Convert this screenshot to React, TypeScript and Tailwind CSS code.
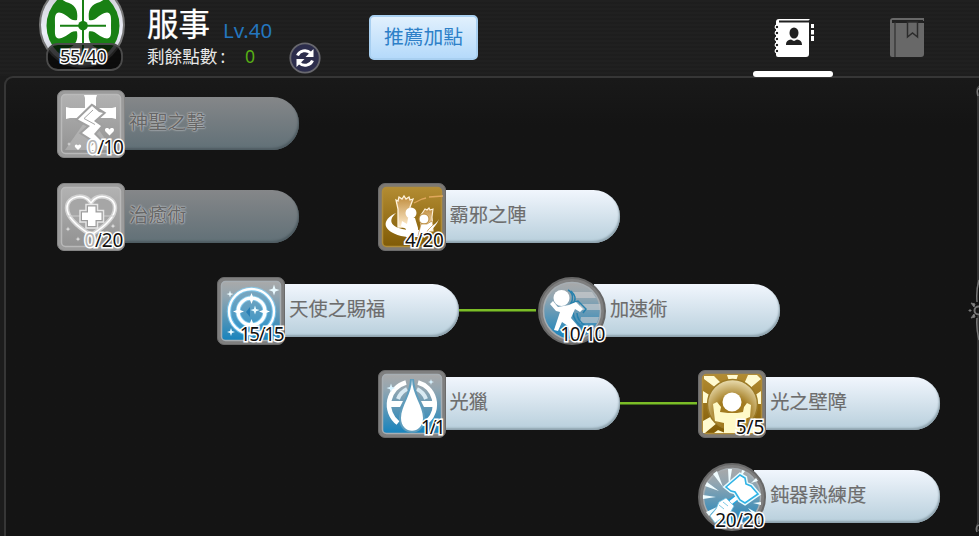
import React from 'react';
import clsx from 'clsx';

type IconKey =
  | 'holyStrike'
  | 'heal'
  | 'castle'
  | 'blessing'
  | 'agility'
  | 'drop'
  | 'barrier'
  | 'mace';

type Tone = 'gray' | 'gold' | 'blue';

interface Skill {
  name: string;
  current: number;
  max: number;
  icon: IconKey;
  tone: Tone;
  round?: boolean;
  linked?: boolean;
  place: string;
  tracking: string;
}

const skills: Skill[] = [
  { name: '神聖之擊', current: 0, max: 10, icon: 'holyStrike', tone: 'gray', place: 'col-start-1 row-start-1', tracking: 'tracking-[-1px]' },
  { name: '治癒術', current: 0, max: 20, icon: 'heal', tone: 'gray', place: 'col-start-1 row-start-2', tracking: 'tracking-[-0.3px]' },
  { name: '霸邪之陣', current: 4, max: 20, icon: 'castle', tone: 'gold', place: 'col-start-3 row-start-2', tracking: 'tracking-[-0.3px]' },
  { name: '天使之賜福', current: 15, max: 15, icon: 'blessing', tone: 'blue', linked: true, place: 'col-start-2 row-start-3', tracking: 'tracking-[-1.4px]' },
  { name: '加速術', current: 10, max: 10, icon: 'agility', tone: 'blue', round: true, place: 'col-start-4 row-start-3', tracking: 'tracking-[-1.4px]' },
  { name: '光獵', current: 1, max: 1, icon: 'drop', tone: 'blue', linked: true, place: 'col-start-3 row-start-4', tracking: 'tracking-[-2px]' },
  { name: '光之壁障', current: 5, max: 5, icon: 'barrier', tone: 'gold', place: 'col-start-5 row-start-4', tracking: 'tracking-[-0.1px]' },
  { name: '鈍器熟練度', current: 20, max: 20, icon: 'mace', tone: 'blue', round: true, place: 'col-start-5 row-start-5', tracking: 'tracking-[-0.3px]' },
];

const sparkle = (x: number, y: number, r: number) =>
  `M${x} ${y - r}L${x + r * 0.25} ${y - r * 0.25}L${x + r} ${y}L${x + r * 0.25} ${y + r * 0.25}L${x} ${y + r}L${x - r * 0.25} ${y + r * 0.25}L${x - r} ${y}L${x - r * 0.25} ${y - r * 0.25}Z`;

const icons: Record<IconKey, React.ReactNode> = {
  holyStrike: (
    <g>
      <path d="M32 26L8 60H56Z" fill="#d6d6d6" opacity=".35" />
      <path d="M27 5h13l-1 3v10h16l4-1v12l-4-1H13l-4 1V17l4 1h15V8z" fill="#fff" />
      <path d="M35 16L21 29.500l12 6.500-8 7 14 9-3 8 6 0 3-8-8-8 7-8-7-5 9-8z" fill="#fff" stroke="#a0a0a0" strokeWidth="4" />
      <path d="M35 16L21 29.500l12 6.500-8 7 14 9-9 8 12 0 3-8-8-8 7-8-7-5 9-8-4-1z" fill="#fff" />
      <path d="M36 20l-9 8.500 11 6" stroke="#a5a5a5" strokeWidth="1" fill="none" />
      <path d="M52.500 45.500l-4-4c-2-3 2-5 4-2 2-3 6-1 4 2z" fill="#fff" />
      <path d="M21 60l-3-3c-1-2 1.500-3.500 3-1.500 1.500-2 4-.5 3 1.500z" fill="#fff" />
      <path d={sparkle(12, 54, 2)} fill="#ddd" />
    </g>
  ),
  heal: (
    <g>
      <path d="M34 52C21 44 10 35 10 25c0-12 18-16 24-5 6-11 24-7 24 5 0 10-11 19-24 27z" fill="#a6a6a6" stroke="#d2d2d2" strokeWidth="4.500" />
      <path d="M34 52C21 44 10 35 10 25c0-12 18-16 24-5 6-11 24-7 24 5 0 10-11 19-24 27z" fill="none" stroke="#fff" strokeWidth="1.500" />
      <path d="M10 33h48" stroke="#ccc" />
      <path d="M31 23.500h7.500v6h6V37h-6v6H31v-6h-6v-7.500h6z" fill="#fff" stroke="#e6e6e6" strokeWidth="5.500" />
      <path d="M31 23.500h7.500v6h6V37h-6v6H31v-6h-6v-7.500h6z" fill="#fff" stroke="#9c9c9c" strokeWidth="2.500" />
      <path d="M31 23.500h7.500v6h6V37h-6v6H31v-6h-6v-7.500h6z" fill="#fff" />
      <path d={`${sparkle(11, 46, 2.5)}${sparkle(21, 56, 2.5)}${sparkle(56, 43, 2.5)}`} fill="#e4e4e4" />
    </g>
  ),
  castle: (
    <g>
      <path d="M18 17l2 1 1-4 3 2 2-3 2 3 3-2 1 3 3-1-3 8v20H20V26z" fill="url(#tower)" stroke="#fff3dc" strokeWidth="1.300" />
      <path d="M45 29l2-3 2 1 2-2 1 2 3-1-1 8 1 14H43V32z" fill="url(#tower)" stroke="#fff3dc" strokeWidth="1.100" />
      <path d="M36 20l8-4 4-1M51 14l14-1" stroke="#e0a75c" strokeWidth="1.300" fill="none" />
      <path d="M18 30C3 37 4 48 23 53c17 4 33-3 38-17-4 8-15 12-31 11C13 45 9 38 18 30z" fill="#fff" />
      <circle cx="33" cy="30" r="5.500" fill="#fff" />
      <path d="M30 35h7l3 10v9H28v-8l-5-3 1-5 5 3z" fill="#fff" />
      <circle cx="46" cy="36" r="5" fill="#fff" stroke="#b98734" strokeWidth="1" />
      <path d="M43 41h6l5-3 1 4-5 5-3 6h-7z" fill="#fff" stroke="#b98734" strokeWidth=".7" />
    </g>
  ),
  blessing: (
    <g>
      <circle cx="34.500" cy="34.500" r="22.500" fill="#3aa3dc" fillOpacity=".35" stroke="#7fd4ff" strokeWidth="4.500" strokeOpacity=".65" />
      <circle cx="34.500" cy="34.500" r="22.500" fill="none" stroke="#fff" strokeWidth="2.300" />
      <circle cx="34.500" cy="34.500" r="13.500" fill="none" stroke="#9be0ff" strokeWidth="5" opacity=".7" />
      <circle cx="34.500" cy="34.500" r="13.500" fill="none" stroke="#fff" strokeWidth="3.200" />
      <path d="M34.500 16l1.500 4 3 2-3 1-1.500 4-1.500-4-3-1 3-2zM34.500 53l1.500-4 3-2-3-1-1.500-4-1.500 4-3 1 3 2zM16 34.500l4-1.500 2-3 1 3 4 1.500-4 1.500-1 3-2-3zM53 34.500l-4-1.500-2-3-1 3-4 1.500 4 1.500 1 3 2-3z" fill="#fff" />
      <path d="M33 30l-4 5 4 5z" fill="#287fb5" />
      <path d={`${sparkle(57, 13, 5.5)}${sparkle(13, 17, 3.5)}${sparkle(14, 55, 4)}${sparkle(38, 33, 4.5)}`} fill="#e9faff" />
    </g>
  ),
  agility: (
    <g>
      <path d="M34 15h20l4 6H36zM42 27h20v6H42zM43 40h18l-2 6H42z" fill="#d0d1d2" opacity=".6" />
      <g fill="none" stroke="#2681ad" strokeWidth="1.500">
        <path d="M30 13c6 3 5 10 3 13l7-2 8 8-3 4" />
        <path d="M33 14c5 5 5 8 3 11M35 34c0 9 5 14 12 18M39 36c0 6 4 10 9 13" />
      </g>
      <circle cx="23.500" cy="21" r="8" fill="#fff" />
      <path d="M20 30l11-2 7-3 7 7-3 3-5-3-4 9 6 7 5 9-5 4-6-1-3-11-6-4-4 9-4-1 4-12 2-6-4-1-6-7 3-3 4 5z" fill="#fff" />
    </g>
  ),
  drop: (
    <g>
      <path d="M28 12.500A23 23 0 0 0 20 53M40 12.500A23 23 0 0 1 50 51" fill="none" stroke="#fff" strokeWidth="4.500" />
      <path d="M20 29c2-6 5-8 9-10M48 29c-2-6-5-8-9-10" fill="none" stroke="#d9eaf3" strokeWidth="4" />
      <path d="M13 31h12l-3 6h-9zM43 31h12v6h-9z" fill="#fff" />
      <path d="M34 9C34 24 23 36 23 48c0 17 22 17 22 0C45 36 34 24 34 9z" fill="#fff" stroke="#5f9dbd" strokeWidth="4" />
      <path d="M34 9C34 24 23 36 23 48c0 17 22 17 22 0C45 36 34 24 34 9z" fill="#fff" />
      <path d={`${sparkle(13, 18, 4.5)}${sparkle(53, 12, 3)}`} fill="#d8f3ff" />
    </g>
  ),
  barrier: (
    <g>
      <path d="M6 6l10 0 7 7-5 5-12-9zM29 5h11l-2 6h-7zM50 5h9l4 4-12 10-5-5zM5 21l8 5-2 7-6 0zM63 21l-7 5 2 8 5 0zM5 51l9-5 5 7-12 10H5zM63 50v13H49l5-12zM20 60l7 3H16z" fill="#fffad0" />
      <circle cx="34.500" cy="34.500" r="25" fill="url(#orb)" stroke="#9b7a26" strokeWidth="1.500" />
      <circle cx="34" cy="32" r="9.500" fill="#fff" />
      <path d="M15 34l4-2 4 5-1 5 8 1h9l6-1 1-5 3-4 4 2-1 12-10 4v12H26V53l-9-2z" fill="#fffac8" />
    </g>
  ),
  mace: (
    <g>
      <g fill="#effcff">
        <path d="M31 24L30 6h4zM25 24L15 11l4-3zM21 28L7 23l2-4zM18 34L5 36v-4zM42 15L44 7l3 1zM53 20L58 15l2 3zM55 40L63 39v3zM50 45L61 51l-3 4zM19 44L11 53l-3-4zM42 50L45 61h-4zM32 50l2 12h-4z" />
      </g>
      <path d="M25 45l16-12" stroke="#24a5dc" strokeWidth="7" />
      <path d="M23 47l18-14" stroke="#fff" strokeWidth="4" />
      <path d="M28 24L42 12l5 3 1 6 5 2 7 8-13 9-5-3-5-8-4-1z" fill="#fff" stroke="#e8fbff" strokeWidth="4.500" />
      <path d="M28 24L42 12l5 3 1 6 5 2 7 8-13 9-5-3-5-8-4-1z" fill="#fff" stroke="#2fb3e6" strokeWidth="1.600" />
      <path d="M21 39l7-4 3 3 5 5-4 7-7 4-8 6-5-7 6-7z" fill="#fff" stroke="#6bc3e4" strokeWidth=".8" />
      <path d="M21 42l5 4M25 39l5 4" stroke="#7dc9e4" strokeWidth="1" />
    </g>
  ),
};

const frameColors: Record<Tone, { edge: string; line: string }> = {
  gray: { edge: '#9b9b9b', line: '#b9b9b9' },
  gold: { edge: '#7d7973', line: '#b08c38' },
  blue: { edge: '#7f7f7f', line: '#a7aeb3' },
};

function SkillIcon({ icon, tone, round }: { icon: IconKey; tone: Tone; round?: boolean }) {
  const { edge, line } = frameColors[tone];
  return (
    <svg viewBox="0 0 68 68" className="block h-[68px] w-[68px]">
      {round ? (
        <>
          <circle cx="34" cy="34" r="33" fill={edge} stroke="#686868" strokeWidth="2" />
          <circle cx="34" cy="34" r="28.500" fill={`url(#${tone})`} stroke={line} strokeWidth="1.500" />
        </>
      ) : (
        <>
          <rect x=".5" y=".5" width="67" height="67" rx="6.500" fill={edge} stroke={tone === 'gray' ? '#858585' : '#6b6b6b'} />
          <rect x="4.500" y="4.500" width="59" height="59" rx="4" fill={`url(#${tone})`} stroke={line} strokeWidth="1.500" />
        </>
      )}
      {icons[icon]}
    </svg>
  );
}

function SkillNode({ skill }: { skill: Skill }) {
  const disabled = skill.tone === 'gray';
  return (
    <div className={clsx('col-span-2 flex h-[68px] items-center', skill.place)}>
      <div className="relative z-10 shrink-0">
        <SkillIcon icon={skill.icon} tone={skill.tone} round={skill.round} />
        <span
          className={clsx(
            'absolute right-[2px] bottom-[-1px] text-[19px] leading-[24px] whitespace-nowrap text-[#111] [-webkit-text-stroke:3px_#fff] [paint-order:stroke_fill]',
            skill.tracking
          )}
        >
          {disabled ? <span className="text-[#b5b5b5]">{skill.current}</span> : skill.current}/{skill.max}
        </span>
      </div>
      <div
        className={clsx(
          '-mt-px -ml-3 flex h-[53px] w-[186px] shrink-0 items-center rounded-r-full pb-[2px] pl-[16px] text-[19.200px] whitespace-nowrap',
          disabled
            ? 'bg-linear-to-b from-[#858789] to-[#617077] text-[#666] shadow-[inset_-1px_-2px_2px_#4f5c62] [text-shadow:0_0_1px_#c0c3c5,0_0_2px_#b8bbbd,0_0_2px_#b8bbbd]'
            : 'bg-linear-to-b from-[#f1f6fd] to-[#b8cfdc] text-[#6d6d6d] shadow-[inset_-1px_-2px_2px_#8fa3ae] [-webkit-text-stroke:0.15px_#6d6d6d]'
        )}
      >
        {skill.name}
      </div>
      {skill.linked && <div className="h-[3px] w-[77px] shrink-0 border-b border-[#456d1b] bg-[#7cbd27]" />}
    </div>
  );
}

function ClassBadge() {
  return (
    <div className="relative h-[76px] w-[86px] shrink-0">
      <svg viewBox="0 0 86 76" className="block h-[76px] w-[86px]">
        <circle cx="43" cy="25" r="42" fill="url(#silver)" stroke="#777" strokeWidth="2" />
        <circle cx="44" cy="25.700" r="36.500" fill="#198014" />
        <path
          d="M38 20C39 12 38 5 27 2L22 -1V-8H66V-1L61 2C50 5 49 12 50 20C57 22 60 13 68 12.500C73 13 72 19 72 25.700C72 32 73 38 68 38.500C60 38 57 30 50 31.500C49 39 50 46 61 49L66 53V60H22V53L27 49C38 46 39 39 38 31.500C31 30 28 38 20 38.500C15 38 16 32 16 25.700C16 19 15 13 20 12.500C28 13 31 22 38 20Z"
          fill="#fff"
        />
        <path d="M44 0v52M21 25.700h46" stroke="#198014" strokeWidth="2" />
        <circle cx="44" cy="25.700" r="4.800" fill="#198014" />
        <rect x="8" y="44" width="75" height="26" rx="11" fill="#050505" fillOpacity=".75" stroke="#4b4b4b" strokeWidth="1.800" />
      </svg>
      <span className="absolute top-[44px] left-[21px] text-[18px] leading-[24px] tracking-[-0.300px] text-[#151515] [-webkit-text-stroke:3px_#fff] [paint-order:stroke_fill]">
        55/40
      </span>
    </div>
  );
}

function Header() {
  return (
    <header className="flex h-[76px] items-start bg-[repeating-linear-gradient(to_bottom,#202020_0px,#202020_2px,#1b1b1b_3px,#202020_4px)] pl-[39px]">
      <ClassBadge />
      <div className="ml-[22px] w-[141px] shrink-0">
        <div className="flex h-[48px] items-center">
          <h1 className="text-[31.500px] font-normal text-white [-webkit-text-stroke:0.3px_#fff]">服事</h1>
          <span className="mt-[13px] ml-[13px] text-[20.500px] leading-none text-[#2476be]">Lv.40</span>
        </div>
        <div className="flex h-[17px] items-center text-[17.600px] whitespace-nowrap text-[#e8e8e8]">
          剩餘點數<span className="ml-[3px]">:</span>
          <span className="ml-[20px] text-[#57ae15]">0</span>
        </div>
      </div>
      <button type="button" className="mt-[42px] ml-px shrink-0">
        <svg viewBox="0 0 32 32" className="block h-8 w-8" fill="none">
          <circle cx="16" cy="16" r="14.700" fill="#2c2d4c" stroke="#68686e" strokeWidth="1.800" />
          <path d="M8.500 13.500c2-5 9-6.500 13-2.500M23.500 18.500c-2 5-9 6.500-13 2.500" stroke="#fff" strokeWidth="3" />
          <path d="M24.500 7v8h-8zM7.500 25v-8h8z" fill="#fff" />
        </svg>
      </button>
      <button
        type="button"
        className="mt-[15px] ml-[48px] flex h-[45px] w-[109px] shrink-0 items-center justify-center rounded-[5px] border-2 border-[#a8cff0] bg-linear-to-b from-[#e1f0fd] to-[#b5dafa] pb-px text-[19.800px] text-[#2d80c8]"
      >
        推薦加點
      </button>
      <nav className="ml-[275px] flex h-[76px]">
        <button type="button" className="flex h-[77px] w-[80px] flex-col items-center justify-end">
          <svg viewBox="0 0 42 42" className="mb-[12px] ml-[3px] block h-[42px] w-[42px]">
            <path d="M5 2h31q-2 1-1 3v32q0 3-3 3H4q-2 0-2-2V5q0-3 3-3z" fill="#fff" />
            <path d="M5 4.500h30" stroke="#202020" strokeWidth="2" />
            <path d="M37 7h3v4h-3zM37 13h3v4.500h-3zM37 19h3v5h-3z" fill="#fff" />
            <ellipse cx="20" cy="16" rx="4.500" ry="5.500" fill="#202020" />
            <path d="M12 28c0-4 2-5 5-5.500l3 1.500 3-1.500c3 .5 5 1.500 5 5.500z" fill="#202020" />
            {[10, 16, 22, 28, 34].map((y) => (
              <circle key={y} cx="3" cy={y} r="1.800" fill="#202020" stroke="#fff" strokeWidth="1.200" />
            ))}
          </svg>
          <span className="relative z-10 h-[6px] w-full shrink-0 rounded-full bg-white" />
        </button>
        <button type="button" className="ml-[56px] flex h-[76px] w-[35px] items-start pt-[17px]">
          <svg viewBox="0 0 35 41" className="block h-[41px] w-[35px]">
            <path d="M4 1h31v3h-1v2h1v31q0 3-3 3H3q-2 0-2-2V4q0-3 3-3z" fill="#686868" />
            <path d="M3 4.500h31" stroke="#222" strokeWidth="3" />
            <path d="M6 5v35" stroke="#303030" strokeWidth="1.200" />
            <path d="M18.500 5h10v15l-5-4-5 4z" fill="#686868" stroke="#2c2c2c" strokeWidth="1.500" />
          </svg>
        </button>
      </nav>
    </header>
  );
}

function GradientDefs() {
  return (
    <svg className="absolute h-0 w-0">
      <defs>
        <linearGradient id="gray" x2="0" y2="1">
          <stop stopColor="#b2b2b2" />
          <stop offset="1" stopColor="#929292" />
        </linearGradient>
        <linearGradient id="gold" x2="0" y2="1">
          <stop stopColor="#b38c32" />
          <stop offset="1" stopColor="#805b06" />
        </linearGradient>
        <linearGradient id="blue" x2="0" y2="1">
          <stop stopColor="#a9a9a9" />
          <stop offset=".25" stopColor="#93a6b1" />
          <stop offset="1" stopColor="#1683bd" />
        </linearGradient>
        <linearGradient id="tower" x2="0" y2="1">
          <stop stopColor="#c08c3c" />
          <stop offset="1" stopColor="#ffedcf" />
        </linearGradient>
        <linearGradient id="silver" x2="0" y2="1">
          <stop stopColor="#c8c8cf" />
          <stop offset=".6" stopColor="#eef0fa" />
          <stop offset="1" stopColor="#b5b8c0" />
        </linearGradient>
        <radialGradient id="orb" cy=".68" r=".7">
          <stop offset=".45" stopColor="#a27b20" />
          <stop offset="1" stopColor="#efe4ba" />
        </radialGradient>
      </defs>
    </svg>
  );
}

export default function App() {
  return (
    <div className="h-[540px] w-[979px] overflow-hidden bg-white font-['Noto_Sans','Noto_Sans_CJK_TC',sans-serif]">
      <GradientDefs />
      <div className="relative h-[536px] overflow-hidden bg-[#1c1c1c]">
        <Header />
        <main className="ml-[4px] h-[470px] w-[990px] rounded-tl-[9px] border-t-2 border-l-2 border-[#363636] bg-linear-to-b from-[#191919] to-[#141414] to-10% pt-[12px] pl-[51px]">
          <div className="grid grid-cols-[repeat(6,160.300px)] grid-rows-[repeat(5,93.300px)]">
            {skills.map((skill) => (
              <SkillNode key={skill.name} skill={skill} />
            ))}
          </div>
        </main>
        {/* ornament on the right edge of the panel */}
        <svg viewBox="0 0 11 460" className="absolute top-[76px] right-0 h-[460px] w-[11px]" fill="none" stroke="#777">
          <path d="M11 10q-3 3-1 7v192M10 240v207q-3 4 1 8" stroke="#4a4a4a" strokeWidth="1.200" />
          <path d="M11 12q-3 2-1 8M11 204q-3 10-2 22M9 242q-1 10 2 22M11 449q-4 2-2 7" strokeWidth="1.500" />
          <circle cx="10.500" cy="234.500" r="4" strokeWidth="2" />
          <path d="M3 227l4 1-1 3zM3 242l4-1-1-3zM1 234h2v1H1z" fill="#888" />
        </svg>
      </div>
    </div>
  );
}
